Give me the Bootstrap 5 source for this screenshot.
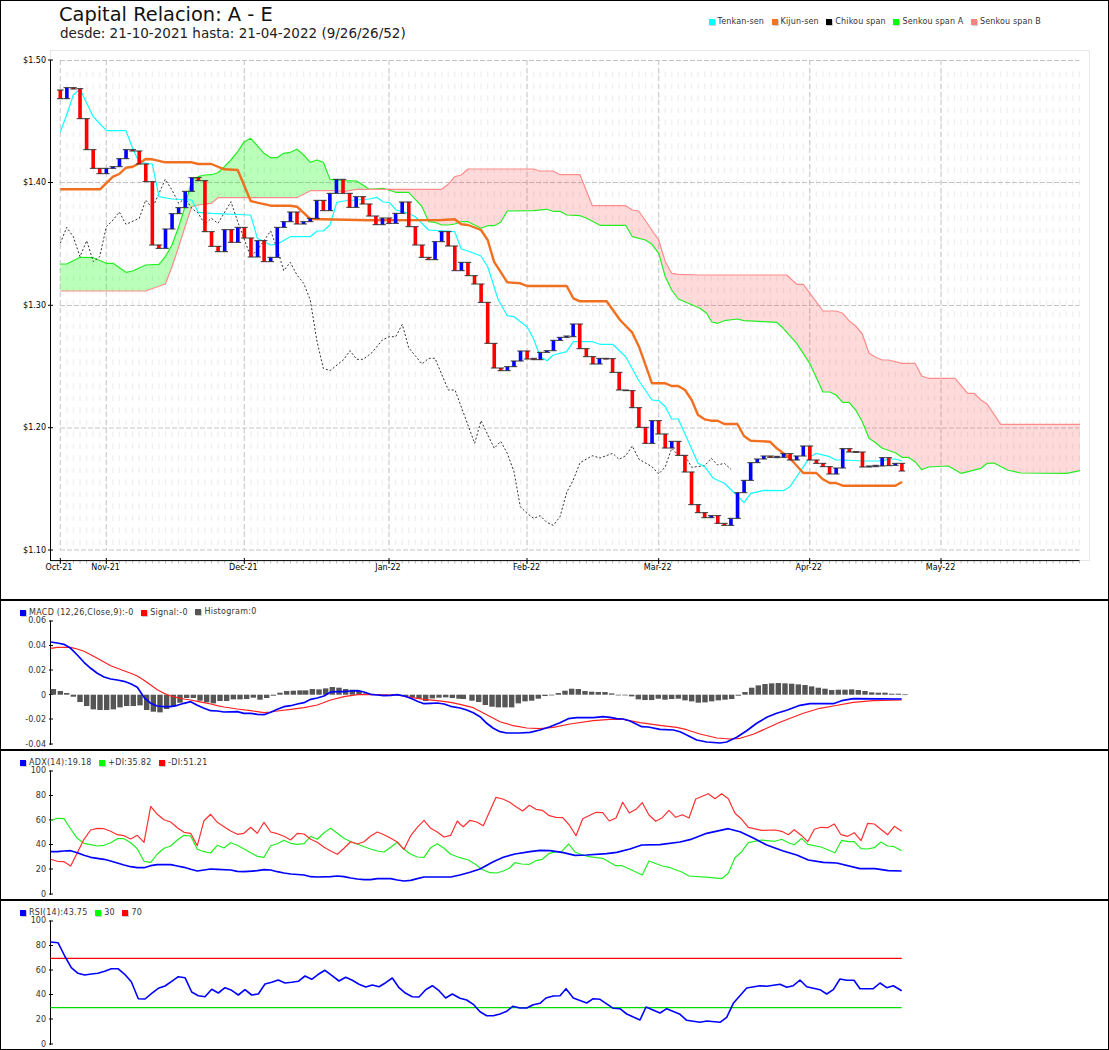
<!DOCTYPE html>
<html lang="es">
<head>
<meta charset="utf-8">
<title>Capital Relacion: A - E</title>
<link href="https://cdn.jsdelivr.net/npm/bootstrap@5.3.0/dist/css/bootstrap.min.css" rel="stylesheet">
<style>
html,body{margin:0;background:#fff;}
body{width:1109px;height:1050px;overflow:hidden;font-family:"DejaVu Sans",sans-serif;color:#222;}
.ch-panel{border:1px solid #000;height:150px;width:1109px;overflow:hidden;}
.ch-main{height:600px;}
.ch-head{height:49px;padding-left:58px;}
.ch-title{font-size:19.4px;line-height:20px;margin-top:4px;color:#111;font-weight:400;}
.ch-sub{font-size:13.5px;line-height:14px;margin:1px 0 0 1px;color:#222;}
.ch-legend{font-size:8px;line-height:10px;letter-spacing:.14px;color:#333;gap:7.6px;}
.ch-legend-top{margin:16px 67px 0 0;}
.ch-legend-sub{height:19px;padding:7px 0 0 19px;align-items:flex-start;letter-spacing:.27px;}
.ch-swatch{display:inline-block;width:6px;height:6px;margin-right:3px;box-shadow:1px 1px 0 #ccc;flex:none;}
.ch-lift{margin-top:-1px;}
.ch-svg{display:block;overflow:visible;}
.ch-axis-main{font-size:8px;fill:#000;}
.ch-axis-sub{font-size:8px;fill:#333;}
</style>
</head>
<body>
<section class="ch-panel ch-main">
  <header class="ch-head d-flex justify-content-between align-items-start">
    <div>
      <div class="ch-title">Capital Relacion: A - E</div>
      <div class="ch-sub">desde: 21-10-2021 hasta: 21-04-2022 (9/26/26/52)</div>
    </div>
    <div class="ch-legend ch-legend-top d-flex">
      <span class="d-flex align-items-center"><i class="ch-swatch" style="background:#00ffff"></i>Tenkan-sen</span>
      <span class="d-flex align-items-center ch-lift"><i class="ch-swatch" style="background:#f47421"></i>Kijun-sen</span>
      <span class="d-flex align-items-center"><i class="ch-swatch" style="background:#000"></i>Chikou span</span>
      <span class="d-flex align-items-center"><i class="ch-swatch" style="background:#00ff00"></i>Senkou span A</span>
      <span class="d-flex align-items-center"><i class="ch-swatch" style="background:#ff8080"></i>Senkou span B</span>
    </div>
  </header>
  <svg id="main" class="ch-svg" width="1107" height="549" viewBox="1 50 1107 549">
    <rect x="50.5" y="50.5" width="1039" height="510" fill="none" stroke="#e6e6e6"/>
    <g id="grid"></g><g id="cloud"></g><g id="lines"></g><g id="bars"></g><g id="axes"></g>
    <g class="ch-axis-main" text-anchor="end">
      <text x="46" y="63">$1.50</text><text x="46" y="185.3">$1.40</text><text x="46" y="307.8">$1.30</text><text x="46" y="430.3">$1.20</text><text x="46" y="552.8">$1.10</text>
    </g>
    <g class="ch-axis-main" text-anchor="middle">
      <text x="59" y="570">Oct-21</text><text x="105.6" y="570">Nov-21</text><text x="243.3" y="570">Dec-21</text><text x="388" y="570">Jan-22</text><text x="526.5" y="570">Feb-22</text><text x="657.7" y="570">Mar-22</text><text x="808.7" y="570">Apr-22</text><text x="940.5" y="570">May-22</text>
    </g>
  </svg>
</section>
<section class="ch-panel">
  <div class="ch-legend ch-legend-sub d-flex">
    <span class="d-flex align-items-center"><i class="ch-swatch" style="background:#00f"></i>MACD (12,26,Close,9):-0</span>
    <span class="d-flex align-items-center"><i class="ch-swatch" style="background:#f00"></i>Signal:-0</span>
    <span class="d-flex align-items-center ch-lift"><i class="ch-swatch" style="background:#555"></i>Histogram:0</span>
  </div>
  <svg id="macd" class="ch-svg" width="1107" height="129" viewBox="1 620 1107 129">
    <g class="ch-axis-sub" text-anchor="end">
      <text x="46" y="623">0.06</text><text x="46" y="648">0.04</text><text x="46" y="673">0.02</text><text x="46" y="697.5">0</text><text x="46" y="722">-0.02</text><text x="46" y="746.5">-0.04</text>
    </g>
  </svg>
</section>
<section class="ch-panel">
  <div class="ch-legend ch-legend-sub d-flex">
    <span class="d-flex align-items-center"><i class="ch-swatch" style="background:#00f"></i>ADX(14):19.18</span>
    <span class="d-flex align-items-center"><i class="ch-swatch" style="background:#0f0"></i>+DI:35.82</span>
    <span class="d-flex align-items-center"><i class="ch-swatch" style="background:#f00"></i>-DI:51.21</span>
  </div>
  <svg id="adx" class="ch-svg" width="1107" height="129" viewBox="1 770 1107 129">
    <g class="ch-axis-sub" text-anchor="end">
      <text x="46" y="773">100</text><text x="46" y="798">80</text><text x="46" y="822.5">60</text><text x="46" y="847">40</text><text x="46" y="872">20</text><text x="46" y="896.5">0</text>
    </g>
  </svg>
</section>
<section class="ch-panel">
  <div class="ch-legend ch-legend-sub d-flex">
    <span class="d-flex align-items-center"><i class="ch-swatch" style="background:#00f"></i>RSI(14):43.75</span>
    <span class="d-flex align-items-center"><i class="ch-swatch" style="background:#0f0"></i>30</span>
    <span class="d-flex align-items-center"><i class="ch-swatch" style="background:#f00"></i>70</span>
  </div>
  <svg id="rsi" class="ch-svg" width="1107" height="129" viewBox="1 920 1107 129">
    <g class="ch-axis-sub" text-anchor="end">
      <text x="46" y="923">100</text><text x="46" y="948">80</text><text x="46" y="972.5">60</text><text x="46" y="997">40</text><text x="46" y="1022">20</text><text x="46" y="1046.5">0</text>
    </g>
  </svg>
</section>
<script src="https://cdn.jsdelivr.net/npm/bootstrap@5.3.0/dist/js/bootstrap.bundle.min.js"></script>
<script>
const NS='http://www.w3.org/2000/svg';
function el(p,t,a){const e=document.createElementNS(NS,t);for(const k in a)e.setAttribute(k,a[k]);p.appendChild(e);return e;}
function $(i){return document.getElementById(i);}
function Z(ox,oy,a){const o=[];for(let i=0;i<a.length;i+=2)o.push([ox+a[i]/3,oy+a[i+1]/3]);return o;}
function P(p){return p.map(q=>q[0].toFixed(1)+','+q[1].toFixed(1)).join(' ');}
function line(g,pts,c,w,extra){el(g,'polyline',Object.assign({points:P(pts),fill:'none',stroke:c,'stroke-width':w,'stroke-linejoin':'round'},extra||{}));}

const X0=60.3,DX=6.575,MONTHS=[60.3,106.3,244.3,389,527,658.7,809.7,941];
/* grid */
const grid=$('grid');
for(let i=0;i<=155;i++){const x=X0+DX*i;
  if(i>0)el(grid,'line',{x1:x,x2:x,y1:71.5,y2:550,stroke:'#eeeeee','stroke-width':1.2,'stroke-dasharray':'5.5 6.5'});
}
MONTHS.forEach(x=>el(grid,'line',{x1:x,x2:x,y1:60,y2:550,stroke:'#c8c8c8','stroke-width':1.1,'stroke-dasharray':'5 3'}));
[60.5,182.5,305.5,428,550].forEach(y=>el(grid,'line',{x1:60,x2:1079.5,y1:y,y2:y,stroke:'#c4c4c4','stroke-width':1,'stroke-dasharray':'5 2'}));

/* ichimoku series */
const tenkan=[].concat(
Z(0,0,[181,395,200,345,220,285,240,267,260,310,280,350,300,372,320,392,378,392,400,450,418,487,457,492,477,590,516,597,575,600,595,637,634,640,752,645,772,715,812,735,831,733,871,710,931,710,951,693,970,693,990,675,1010,607,1030,603,1108,597]),
Z(370,0,[20,592,40,606,58,607,78,630,116,640,136,650,176,690,254,695,274,747,294,753,333,768,353,800,385,900]),
Z(370,300,[412,47,432,50,471,80,490,115,511,170,531,182,550,165,590,155,610,125,667,125,690,133,728,133,767,170,807,243,846,300,866,302,886,320,905,357,925,357,965,447,984,490,1004,500,1030,535,1063,550]),
Z(700,300,[112,587,132,608,152,580,192,571,250,572,270,560,329,472,349,460,389,470,408,480,428,480,487,483,547,483,566,477,586,477,606,483]));
const kijun=[].concat(
Z(0,0,[181,568,300,568,339,530,358,522,378,503,398,500,418,490,437,477,457,478,496,487,575,487,595,492,634,492,673,508,713,510,752,603,772,608,812,617,871,617,891,620,931,657,1108,661]),
Z(370,0,[215,660,254,658,274,673,294,675,333,690,353,720,372,785,412,847,451,850,471,858,590,858,610,895]),
Z(370,300,[630,4,710,4,750,60,787,98,807,140,846,250,886,250,905,258,925,258,945,270,965,300,984,345,1004,358]),
Z(700,300,[33,362,53,362,73,372,112,372,132,408,152,422,210,425,230,445,270,475,310,519,349,519,369,538,389,549,408,549,428,557,586,557,606,546]));
const chikou=[].concat(
Z(0,0,[181,730,200,682,220,710,240,770,260,722,280,785,299,770,319,680,339,660,358,636,378,673,418,655,437,600,457,625,496,538,516,570,536,610,555,595,575,625,595,640,614,673,634,655,654,670,693,605,713,665,752,770,772,750,812,693,831,745,851,812,871,787,891,825,911,850,931,900]),
Z(0,300,[950,120,970,205,990,212,1030,180,1050,152,1070,178,1090,178]),
Z(370,300,[7,157,37,120,58,110,77,110,97,73,116,143,156,192,176,175,195,175,235,270,255,270,314,430,333,362,373,445,392,424,412,460,432,515,451,620,471,640,491,655,511,647,530,667,550,676,570,650,590,577,610,540,630,488,667,467,690,474,728,460,747,478,767,467,787,438,807,478,846,500,866,522,886,500,905,445,925,465,945,467,965,502,1004,497,1024,475,1043,495,1063,490,1083,508]));
const spanA=[].concat(
Z(0,0,[181,792,200,792,240,772,280,773,319,790,339,790,378,817,398,813,437,795,477,793,496,770,516,735,536,680,555,620,575,540,595,530,614,525,634,524,654,518,673,500,693,480,713,455,733,425,752,415,772,437,792,460,812,473,831,473,851,460,871,457,891,448,911,465,931,487,951,480,970,487,990,538,1030,542,1070,543,1108,568]),
Z(370,0,[40,565,77,577,116,577,156,620,176,665,195,667,215,675,235,675,254,672,274,665,294,665,333,685,353,677,372,677,392,667,412,633,490,632,530,628,550,634,570,634,590,645,630,647,650,655,690,676,767,676,787,710,826,720,846,733,866,760,886,830,905,870,925,897]),
Z(700,300,[0,25,20,40,35,66,53,70,73,62,112,57,132,62,190,65,230,67,250,85,290,130,329,190,369,276,389,276,408,285,428,307,447,307,467,330,487,365,507,415,527,428,547,445,586,458,606,472,625,472,645,485,665,509,685,501,745,498,783,520,843,505,862,490,882,489,922,510,961,519,1100,520,1140,512]));
const spanB=[].concat(
Z(0,0,[181,873,437,873,496,852,516,800,536,740,555,680,575,620,595,615,634,610,654,593,891,593,931,572,1010,572,1030,575,1070,568,1108,568]),
Z(370,0,[215,568,235,553,254,530,274,525,294,507,490,507,510,513,550,513,570,524,630,524,667,617,767,617,787,630,806,633,866,720,886,785,905,820,925,823]),
Z(700,0,[0,825,260,825,290,853,310,853]),
Z(700,300,[369,33,408,33,428,40,447,62,467,78,487,102,507,160,527,172,547,180,566,180,606,190,645,190,665,228,685,235,765,235,803,280,822,280,843,300,862,313,902,373,1140,373]));

/* cloud */
const XC=383,YC=188.5,cloud=$('cloud');
const aL=spanA.filter(p=>p[0]<XC),bL=spanB.filter(p=>p[0]<XC),aR=spanA.filter(p=>p[0]>XC),bR=spanB.filter(p=>p[0]>XC);
el(cloud,'polygon',{points:P(aL.concat([[XC,YC]],bL.slice().reverse())),fill:'#00ff00','fill-opacity':.27});
el(cloud,'polygon',{points:P([[XC,YC]].concat(bR,aR.slice().reverse())),fill:'#ff3030','fill-opacity':.18});

const lg=$('lines');
line(lg,spanA,'#22ee22',1.2);
line(lg,spanB,'#ff8c8c',1.2);
line(lg,chikou,'#333',1,{'stroke-dasharray':'2 2'});
line(lg,tenkan,'#1ff',1.2);
line(lg,kijun,'#f07020',2.4);

/* candles */
const K=[];
function add(oy,s){s.trim().split(/\s+/).forEach(t=>{const v=t.slice(1).split(',');K.push([t[0],oy+v[0]/3,oy+v[1]/3]);});}
add(0,'r270,296 b263,296 r263,267 r266,356 r356,449 r449,505 r505,521 b505,521 b500,505 b476,500 b449,476 r449,453 r453,492 r492,545 r545,735 r735,745 b687,745 b641,687 b623,641 b574,623 b533,574 r533,542 r542,695 r695,739 r739,755 b689,755 r689,727 b682,727 r682,714 r714,771 b722,771 r722,785 b772,785 b682,772 b665,682 b636,665 r636,672 b665,672 b655,665 b601,655 r601,632 b580,632 b538,580 r538,580 r580,622 b590,622 r590,612 r612,648 r648,674 b654,674 r654,670 b640,670 b606,640 r606,680 r680,735 r735,772 r772,779 b725,779 b695,725 r695,738 r738,812 b787,812 r787,827 r827,852 r852,907');
add(300,'r7,130 r130,204 r204,212 b200,212 b183,200 b153,183 r153,177 r175,179 b157,179 b152,157 b121,152 b112,121 b108,112 b72,110 r72,146 r146,170 r170,192 b175,192 r175,177 r176,217 r217,270 r270,272 r272,323 r323,382 r382,430 b362,430 r362,402 r402,444 b424,444 r424,466 r466,516 r516,614 r614,638 r638,653 b647,653 r647,670 r670,676 b655,676 b578,655 b541,578 b488,541 b477,488 b468,477 r468,472 b469,473 b461,472 r461,480 b468,480 b438,468 r438,480 r480,490 r490,500 r500,522 b504,522 b446,504 r446,456 r455,457 r456,501 b498,501 b496,500 b473,498 r473,497 b490,496 r490,513');
const bg=$('bars');
K.forEach((k,i)=>{const x=X0+DX*i,c=k[0]=='r'?'#ff0000':'#0000ff';
  el(bg,'rect',{x:x-1.8,y:k[1],width:3.6,height:Math.max(k[2]-k[1],1),fill:c});
  [k[1],k[2]].forEach(y=>el(bg,'rect',{x:x-3.3,y:y-.5,width:6.6,height:1,fill:'#333'}));
});

/* main axes */
const ax=$('axes');
for(let i=0;i<=155;i++){const x=X0+DX*i;el(ax,'line',{x1:x,x2:x,y1:561,y2:563.5,stroke:'#bbb','stroke-width':1});}
el(ax,'line',{x1:50.5,x2:50.5,y1:60,y2:561,stroke:'#000','stroke-width':1});
el(ax,'line',{x1:50,x2:1079.5,y1:560.6,y2:560.6,stroke:'#000','stroke-width':1});
[60,182.5,305.3,427.7,550].forEach(y=>el(ax,'line',{x1:48,x2:53,y1:y,y2:y,stroke:'#000','stroke-width':1}));
MONTHS.forEach(x=>el(ax,'line',{x1:x,x2:x,y1:558,y2:564,stroke:'#000','stroke-width':1}));

/* sub panels */
function subAxis(id,top,ticks){const s=$(id);
  el(s,'line',{x1:50.5,x2:50.5,y1:top,y2:top+124.5,stroke:'#000','stroke-width':1});
  ticks.forEach(y=>el(s,'line',{x1:49,x2:53,y1:top+y,y2:top+y,stroke:'#000','stroke-width':1}));return s;}
const TK=[.5,25,49.5,74,98.5,123.5];

/* MACD */
const mc=subAxis('macd',620.5,TK);
const h=[160,17,181,11,200,5,220,-6,240,-22,260,-34,280,-44,300,-46,320,-46,340,-44,360,-38,380,-34,400,-34,420,-32,440,-46,460,-51,480,-53,500,-43,520,-35,540,-24,560,-10,580,-10,600,-18,620,-23,640,-26,660,-19,680,-19,700,-14,720,-14,740,-13,760,-9,780,-15,800,-10,820,-3,840,6,860,11,880,12,900,13,917,13,937,17,957,16,977,19,997,23,1017,21,1037,17,1057,15,1077,12,1097,4,1117,2,1137,2,1157,1,1177,1,1197,-1,1217,-4,1237,-8,1257,-12,1277,-19,1297,-11,1317,-9,1337,-8,1357,-10,1377,-12];
const h2=[10,-13,36,-18,56,-22,76,-31,96,-36,115,-38,135,-38,155,-38,175,-26,195,-20,215,-18,235,-12,255,-4,275,-1,295,5,315,12,335,18,355,17,375,11,395,9,415,8,435,8,455,4,475,-1,495,-1,515,-5,535,-14,555,-16,575,-16,595,-12,615,-15,635,-13,655,-12,675,-17,695,-20,715,-24,735,-23,755,-20,775,-17,795,-15,815,-13,835,-3,855,8,875,21,895,28,915,32,935,34,955,35,975,34,995,33,1015,31,1035,29,1055,25,1075,21,1095,18,1115,14,1135,15,1155,15,1175,16,1195,14,1215,11,1235,7,1255,6,1275,6,1295,3,1315,3,1335,1];
function hist(a,ox){for(let i=0;i<a.length;i+=2){const v=a[i+1]/3,y=v>0?694.7-v:694.7,ht=Math.max(Math.abs(v),.7);
  el(mc,'rect',{x:ox+a[i]/3-2.7,y:y,width:5.4,height:ht,fill:'#555'});}}
hist(h,0);hist(h2,460);
line(mc,Z(0,600,[152,145,172,142,212,142,232,147,252,154,272,164,292,175,312,186,332,197,352,205,372,212,392,220,412,228,432,241,452,255,472,269,492,280,512,288,532,293,552,297,572,300,592,304,612,308,632,312,652,317,672,321,712,327,752,332,792,338,812,336,832,333,872,328,912,323,952,315,992,300,1032,290,1072,284,1112,283,1152,285,1192,285,1232,292,1272,298,1312,302,1352,307,1380,313]).concat(Z(460,600,[40,323,80,344,120,365,160,377,200,384,240,386,280,382,330,372,400,362,450,358,490,358,540,368,600,376,650,382,680,389,720,402,770,414,810,417,840,415,880,403,960,367,1030,340,1080,325,1120,318,1180,307,1240,302,1325,300])),'#ff2020',1.2);
line(mc,Z(0,600,[152,126,172,129,192,133,212,145,232,165,252,187,272,205,292,220,312,231,332,237,352,240,372,244,392,251,412,262,432,292,452,310,472,318,492,320,512,320,532,316,552,310,572,305,592,316,612,325,632,332,652,333,672,336,712,335,732,340,752,340,772,343,792,344,812,337,832,328,852,320,872,317,892,312,912,308,932,298,952,294,972,288,992,276,1012,275,1032,275,1052,273,1072,272,1092,276,1112,283,1132,285,1152,287,1172,286,1192,284,1212,288,1232,295,1252,304,1272,311,1292,310,1312,309,1332,312,1352,319,1380,324]).concat(Z(460,600,[20,330,40,338,60,350,80,370,100,385,120,395,140,399,180,399,210,397,240,390,270,380,300,368,325,356,350,353,400,353,430,350,450,352,470,356,490,357,510,363,545,380,565,381,600,388,640,390,660,395,680,405,710,420,740,426,780,429,800,426,830,412,860,392,890,370,920,352,950,340,980,331,1020,316,1050,311,1120,311,1145,302,1180,296,1325,297])),'#0000ff',1.7);

/* ADX */
const ad=subAxis('adx',770.5,TK);
line(ad,Z(0,750,[152,212,172,205,192,206,212,237,232,265,252,280,272,284,292,288,312,286,332,278,352,266,372,266,392,278,412,296,432,334,452,337,472,312,492,295,512,288,532,270,552,256,572,258,592,298,612,305,632,309,652,286,672,294,692,278,712,286,732,297,752,308,772,319,792,322,812,287,832,281,852,271,872,280,892,283,912,281,932,259,952,268,972,248,992,235,1012,250,1032,265,1052,275,1072,282,1092,290,1112,297,1132,303,1152,306,1172,292,1192,277,1212,298,1232,313,1252,321,1272,322,1292,293,1312,281,1332,295,1352,313,1380,323]).concat(Z(460,750,[25,330,45,342,65,358,90,368,110,369,130,363,148,355,165,338,185,342,208,343,228,332,247,328,268,310,290,305,305,304,326,282,346,307,366,314,386,320,428,325,467,347,487,347,547,375,567,333,607,348,627,352,667,367,687,378,747,382,785,386,805,370,825,323,845,305,865,278,905,270,945,274,965,268,985,278,1003,284,1025,265,1043,283,1083,291,1125,308,1145,271,1165,275,1183,275,1203,296,1223,297,1243,293,1263,276,1283,288,1303,290,1325,302])),'#22ee22',1.2);
line(ad,Z(0,750,[152,328,172,334,192,335,212,348,232,308,252,268,272,240,292,235,312,236,332,244,352,254,372,257,392,267,412,256,432,277,452,169,472,193,492,209,512,216,532,233,552,247,572,250,592,287,612,212,632,193,652,217,672,230,692,243,712,253,732,250,752,232,772,250,792,217,812,246,832,251,852,259,872,270,892,250,912,252,932,268,952,277,972,292,992,303,1012,313,1032,295,1052,275,1072,282,1092,275,1112,258,1132,246,1152,254,1172,265,1192,276,1212,298,1232,257,1252,232,1272,211,1292,235,1312,246,1332,261,1352,256,1372,213,1380,222]).concat(Z(460,750,[10,230,30,211,50,216,70,227,108,142,128,147,148,156,168,170,188,183,208,166,228,178,247,181,268,197,288,202,308,203,328,225,348,257,368,206,408,187,428,188,448,213,468,204,488,157,508,189,528,178,547,158,567,195,587,214,607,203,627,181,647,202,667,194,687,204,707,147,745,131,765,146,785,131,805,146,825,190,845,208,865,232,905,241,945,240,965,244,985,254,1003,239,1025,257,1043,275,1063,238,1083,232,1103,233,1123,222,1143,254,1163,259,1183,248,1203,272,1223,220,1243,222,1283,254,1303,229,1325,244])),'#ff3030',1.2);
line(ad,Z(0,750,[152,305,172,305,192,303,212,302,232,308,252,316,272,322,292,325,312,328,332,333,352,339,372,345,392,350,412,353,432,353,452,347,472,344,512,344,532,348,552,352,572,358,592,363,612,360,632,357,652,358,692,360,712,364,732,365,772,362,792,359,812,360,832,365,852,369,872,372,912,375,932,380,952,381,992,380,1012,378,1032,380,1052,384,1072,387,1092,389,1112,389,1132,386,1172,386,1192,390,1212,393,1232,391,1252,386,1272,381,1312,381,1352,381,1380,375]).concat(Z(460,750,[30,367,60,357,100,335,130,322,165,312,210,305,240,301,270,302,310,308,345,316,380,315,440,311,470,307,510,297,545,285,600,284,660,276,690,269,740,250,805,236,840,245,880,264,920,285,970,303,1010,315,1045,330,1090,337,1130,339,1200,356,1245,356,1285,362,1325,363])),'#0000ff',1.7);

/* RSI */
const rs=subAxis('rsi',920.5,TK);
el(rs,'line',{x1:50.5,x2:901.7,y1:958.3,y2:958.3,stroke:'#ff0000','stroke-width':1.2});
el(rs,'line',{x1:50.5,x2:901.7,y1:1007.7,y2:1007.7,stroke:'#00dd00','stroke-width':1.2});
line(rs,Z(0,900,[152,126,174,128,194,168,214,203,234,220,254,225,274,222,294,220,314,214,334,206,354,206,374,223,394,245,415,296,435,297,455,280,475,265,495,258,515,244,535,230,555,233,575,276,595,287,615,290,635,268,655,279,675,263,695,271,715,285,735,269,755,285,775,282,795,252,815,247,835,240,855,249,875,247,895,244,915,228,935,238,955,223,975,211,995,226,1017,243,1037,232,1057,241,1077,253,1097,261,1117,255,1137,260,1157,248,1177,234,1197,263,1217,280,1237,290,1257,291,1277,269,1297,257,1317,272,1337,294,1357,282,1380,295]).concat(Z(460,900,[20,300,40,313,60,335,80,347,100,347,120,342,140,334,158,319,180,324,200,324,220,314,240,310,258,294,280,288,300,287,318,266,340,294,380,309,400,296,420,298,460,325,480,326,500,342,540,360,558,321,600,339,620,326,660,343,680,361,720,367,740,363,780,367,800,352,820,310,860,264,900,257,920,259,960,253,980,262,1000,257,1020,240,1040,260,1080,269,1100,282,1120,269,1140,237,1160,241,1182,241,1200,266,1240,266,1260,249,1280,263,1300,257,1325,272])),'#0000ff',1.6);
</script>
</body>
</html>
